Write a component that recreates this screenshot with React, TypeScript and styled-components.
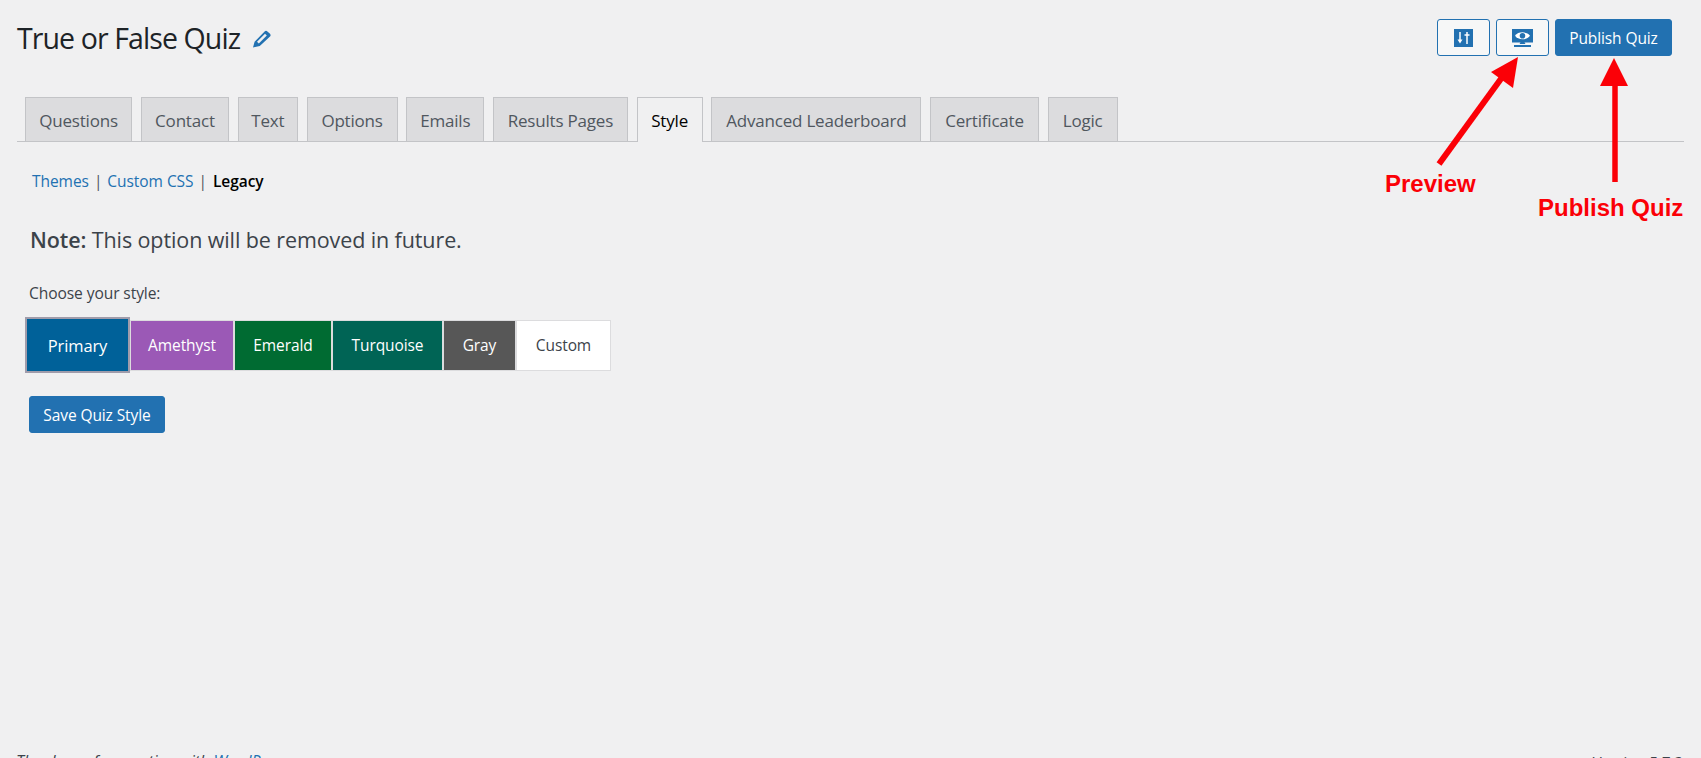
import React from "react";
import styled, { createGlobalStyle } from "styled-components";

const Global = createGlobalStyle`
  html, body { margin: 0; padding: 0; height: 100%; background: #f0f0f1; overflow: hidden; }
  body { font-family: "Open Sans", "Noto Sans", sans-serif; color: #3c434a; }
  * { box-sizing: border-box; }
`;

const Page = styled.div`
  position: relative;
  width: 1701px;
  height: 758px;
  overflow: hidden;
  display: flex;
  flex-direction: column;
`;
const Main = styled.main`
  flex: 0 0 751px;
  padding: 19px 17px 0 17px;
`;
const TitleRow = styled.header`
  display: flex;
  justify-content: space-between;
  align-items: flex-start;
  height: 37px;
  padding-right: 12px;
`;
const TitleGroup = styled.div`
  display: flex;
  align-items: center;
  gap: 12px;
  padding-top: 1px;
`;
const Title = styled.h1`
  margin: 0;
  font-size: 28.5px;
  line-height: 37px;
  font-weight: 400;
  color: #1d2327;
  letter-spacing: -0.9px;
`;
const Actions = styled.div`
  display: flex;
  gap: 6px;
`;
const IconButton = styled.button`
  width: 53px;
  height: 37px;
  padding: 0;
  display: flex;
  align-items: center;
  justify-content: center;
  background: #f6f7f7;
  border: 1px solid #2271b1;
  border-radius: 3px;
`;
const PrimaryButton = styled.button<{ $w: number }>`
  width: ${(p) => p.$w}px;
  height: 37px;
  padding: 0;
  background: #2271b1;
  border: 1px solid #2271b1;
  border-radius: 3px;
  color: #fff;
  font-family: inherit;
  font-size: 15.5px;
  letter-spacing: -0.1px;
`;
const TabBar = styled.nav`
  margin-top: 41px;
  height: 45px;
  padding-left: 8px;
  display: flex;
  gap: 8.7px;
  border-bottom: 1px solid #c3c4c7;
`;
const Tab = styled.a<{ $w: number; $active?: boolean }>`
  flex: none;
  width: ${(p) => p.$w}px;
  height: ${(p) => (p.$active ? 45 : 44)}px;
  padding-top: 1px;
  display: flex;
  align-items: center;
  justify-content: center;
  background: ${(p) => (p.$active ? "#f0f0f1" : "#dcdcde")};
  border: 1px solid #c3c4c7;
  border-bottom: 0;
  color: ${(p) => (p.$active ? "#000" : "#50575e")};
  font-size: 17px;
  font-weight: 500;
  letter-spacing: -0.2px;
  white-space: nowrap;
`;
const SubNav = styled.div`
  margin-top: 28px;
  padding-left: 15px;
  display: flex;
  align-items: center;
  gap: 5px;
  height: 22px;
  font-size: 15.5px;
  letter-spacing: -0.05px;
`;
const SubLink = styled.a`
  color: #2271b1;
`;
const SubCurrent = styled.span`
  color: #000;
  font-weight: 600;
  margin-left: 1px;
`;
const Sep = styled.span`
  color: #50575e;
`;
const Note = styled.p`
  margin: 33px 0 0 13px;
  font-size: 21.5px;
  line-height: 30px;
  letter-spacing: -0.1px;
  color: #3c434a;
  b { font-weight: 600; }
`;
const Label = styled.p`
  margin: 28px 0 0 12px;
  font-size: 15.6px;
  line-height: 20px;
  letter-spacing: -0.1px;
`;
const Swatches = styled.div`
  margin: 14px 0 0 8px;
  height: 56px;
  display: flex;
  align-items: center;
`;
const Swatch = styled.button<{ $w: number; $bg: string; $fg?: string; $active?: boolean }>`
  width: ${(p) => p.$w}px;
  height: ${(p) => (p.$active ? 56 : 51)}px;
  padding: 0;
  background: ${(p) => p.$bg};
  color: ${(p) => p.$fg || "#fff"};
  border: ${(p) => (p.$active ? "2px solid #a09cab" : "1px solid #dcdcde")};
  font-family: inherit;
  font-size: ${(p) => (p.$active ? 16.5 : 15.5)}px;
  letter-spacing: -0.1px;
`;
const SaveRow = styled.div`
  margin: 23px 0 0 12px;
`;
const Footer = styled.footer`
  flex: none;
  padding: 0 18px 0 16px;
  display: flex;
  justify-content: space-between;
  font-size: 16px;
  line-height: 20px;
`;
const Thanks = styled.em`
  a { color: #2271b1; }
`;
const Version = styled.span`
  font-size: 15px;
`;
const Callout = styled.span<{ $x: number; $y: number }>`
  position: absolute;
  left: ${(p) => p.$x}px;
  top: ${(p) => p.$y}px;
  font-family: "Liberation Sans", Arial, sans-serif;
  font-weight: 700;
  font-size: 24px;
  line-height: 28px;
  color: #fb0007;
  white-space: nowrap;
`;
const ArrowLayer = styled.svg`
  position: absolute;
  left: 0;
  top: 0;
  pointer-events: none;
`;

const tabs = [
  ["Questions", 107], ["Contact", 88.5], ["Text", 60], ["Options", 91], ["Emails", 78],
  ["Results Pages", 135], ["Style", 66], ["Advanced Leaderboard", 210], ["Certificate", 109], ["Logic", 70],
] as const;

const swatches = [
  { n: "Primary", w: 105, bg: "#006199", active: true },
  { n: "Amethyst", w: 104, bg: "#9b59b6" },
  { n: "Emerald", w: 98, bg: "#006b32" },
  { n: "Turquoise", w: 111, bg: "#006455" },
  { n: "Gray", w: 73, bg: "#575757" },
  { n: "Custom", w: 95, bg: "#ffffff", fg: "#3c434a" },
];

const PencilIcon = () => (
  <svg width="20" height="18" viewBox="0 0 20 18">
    <path d="M1 17.500l1.600-5.800L12.600 1.400c.8-.8 2-.8 2.800 0l2.600 2.400c.8.8.8 2 0 2.800L7.800 16z" fill="#2271b1" />
    <path d="M5 11.800l8-8 1.800 1.700-8 8z" fill="#f0f0f1" />
  </svg>
);
const SlidersIcon = () => (
  <svg width="19" height="18" viewBox="0 0 19 18">
    <rect width="19" height="18" fill="#2271b1" />
    <path d="M6 3v8" stroke="#fff" strokeWidth="1.500" fill="none" />
    <path d="M3.500 10.500h5L6 14.500z" fill="#fff" />
    <path d="M13 15V3" stroke="#fff" strokeWidth="1.500" fill="none" />
    <path d="M10.500 6h5" stroke="#fff" strokeWidth="1.500" fill="none" />
  </svg>
);
const PreviewIcon = () => (
  <svg width="21" height="18" viewBox="0 0 21 18">
    <path d="M0 0h21v13.500h-8.500l1 1.500h-6l1-1.500H0z" fill="#2271b1" />
    <rect x="2" y="16" width="17" height="2" fill="#2271b1" />
    <path d="M3 6.800C6 2.200 15 2.200 18 6.800 15 11.400 6 11.400 3 6.800z" fill="#fff" />
    <circle cx="10.500" cy="6.800" r="2.800" fill="#2271b1" />
  </svg>
);

export default function App() {
  return (
    <Page>
      <Global />
      <Main>
        <TitleRow>
          <TitleGroup>
            <Title>True or False Quiz</Title>
            <PencilIcon />
          </TitleGroup>
          <Actions>
            <IconButton aria-label="Settings"><SlidersIcon /></IconButton>
            <IconButton aria-label="Preview"><PreviewIcon /></IconButton>
            <PrimaryButton $w={117}>Publish Quiz</PrimaryButton>
          </Actions>
        </TitleRow>
        <TabBar>
          {tabs.map(([n, w]) => (
            <Tab key={n} $w={w} $active={n === "Style"}>{n}</Tab>
          ))}
        </TabBar>
        <SubNav>
          <SubLink>Themes</SubLink><Sep>|</Sep>
          <SubLink>Custom CSS</SubLink><Sep>|</Sep>
          <SubCurrent>Legacy</SubCurrent>
        </SubNav>
        <Note><b>Note:</b> This option will be removed in future.</Note>
        <Label>Choose your style:</Label>
        <Swatches>
          {swatches.map((s) => (
            <Swatch key={s.n} $w={s.w} $bg={s.bg} $fg={s.fg} $active={s.active}>{s.n}</Swatch>
          ))}
        </Swatches>
        <SaveRow><PrimaryButton $w={136}>Save Quiz Style</PrimaryButton></SaveRow>
      </Main>
      <Footer>
        <Thanks>Thank you for creating with <a>WordPress</a>.</Thanks>
        <Version>Version 5.7.2</Version>
      </Footer>
      <ArrowLayer width="1701" height="758" viewBox="0 0 1701 758">
        <path d="M1439 164L1503 76" stroke="#fb0007" strokeWidth="6" fill="none" />
        <path d="M1491 72L1518 57L1513 88z" fill="#fb0007" />
        <path d="M1615 182V84" stroke="#fb0007" strokeWidth="5.500" fill="none" />
        <path d="M1600 86L1614 58L1628 86z" fill="#fb0007" />
      </ArrowLayer>
      <Callout $x={1385} $y={170}>Preview</Callout>
      <Callout $x={1538} $y={194}>Publish Quiz</Callout>
    </Page>
  );
}
